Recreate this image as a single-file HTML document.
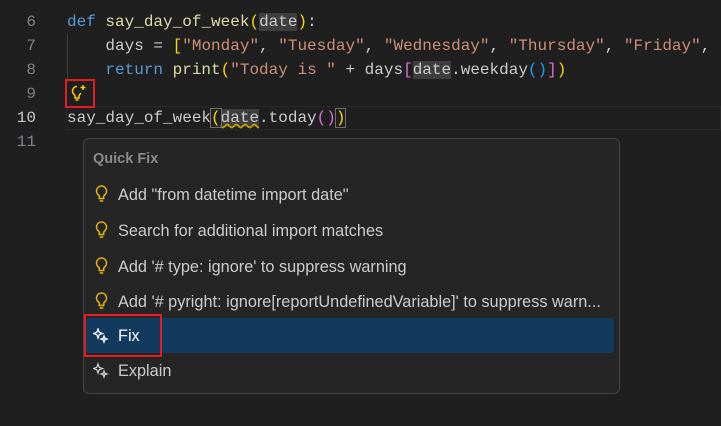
<!DOCTYPE html>
<html><head><meta charset="utf-8"><style>
*{margin:0;padding:0;box-sizing:border-box}
body{width:721px;height:426px;background:#1f1f1f;overflow:hidden;position:relative;font-family:"Liberation Mono",monospace}
.ln{position:absolute;left:0;width:36px;text-align:right;font-size:16px;color:#7d848c;line-height:24px}
.code{position:absolute;left:67px;font-size:16px;line-height:24px;color:#cccccc;white-space:pre}
.k{color:#569cd6}.f{color:#dcdcaa}.s{color:#ce9178}.g{color:#ffd700}.p{color:#da70d6}.b{color:#179fff}
.hl{background:#3e3e3e}
.menu{position:absolute;left:83px;top:138px;width:537px;height:256px;background:#252526;border:1px solid #454545;border-radius:6px;font-family:"Liberation Sans",sans-serif;font-size:16.3px;color:#cccccc}
.item{position:absolute;left:0;width:535px;height:35px;line-height:35px;padding-left:34px}
</style></head><body>
<div style="position:absolute;left:66px;top:106px;width:655px;height:24px;border:1px solid #282828"></div>
<div style="position:absolute;left:67px;top:34px;width:1px;height:48px;background:#404040"></div>
<div class="ln" style="top:10px">6</div>
<div class="ln" style="top:34px">7</div>
<div class="ln" style="top:58px">8</div>
<div class="ln" style="top:82px">9</div>
<div class="ln" style="top:106px;color:#cccccc">10</div>
<div class="ln" style="top:130px">11</div>
<div class="code" style="top:10px"><span class="k">def</span> <span class="f">say_day_of_week</span><span class="g">(</span><span class="hl">date</span><span class="g">)</span>:</div>
<div class="code" style="top:34px">    days = <span class="g">[</span><span class="s">"Monday"</span>, <span class="s">"Tuesday"</span>, <span class="s">"Wednesday"</span>, <span class="s">"Thursday"</span>, <span class="s">"Friday"</span>, </div>
<div class="code" style="top:58px">    <span class="k">return</span> <span class="f">print</span><span class="g">(</span><span class="s">"Today is "</span> + days<span class="p">[</span><span class="hl">date</span>.weekday<span class="b">()</span><span class="p">]</span><span class="g">)</span></div>
<div class="code" style="top:106px">say_day_of_week<span class="g" style="outline:1px solid #707070">(</span><span class="hl" style="text-decoration:underline wavy #cca700">date</span>.today<span class="p">()</span><span class="g" style="outline:1px solid #707070">)</span></div>
<div style="position:absolute;left:65px;top:79px;width:30px;height:29px;border:2px solid #e51c23"></div>
<svg style="position:absolute;left:69px;top:83px" width="20" height="20" viewBox="0 0 20 20" fill="none" stroke="#ffcc00" stroke-width="1.5"><path d="M8 3.5a4.5 4.5 0 0 0-2.8 8c.6.5.8 1.2.8 2V15h4v-1.5c0-.8.2-1.5.8-2a4.5 4.5 0 0 0 1-1.5"/><path d="M6.5 17h3"/><path d="M14 2v5M11.5 4.5h5"/></svg>
<div class="menu">
<div style="position:absolute;left:9px;top:12px;font-weight:bold;color:#8b8b8b;font-size:14.5px">Quick Fix</div>
<div class="item" style="top:39px">Add "from datetime import date"</div>
<div class="item" style="top:75px">Search for additional import matches</div>
<div class="item" style="top:111px">Add '# type: ignore' to suppress warning</div>
<div class="item" style="top:146px">Add '# pyright: ignore[reportUndefinedVariable]' to suppress warn...</div>
<div style="position:absolute;left:2px;top:179px;width:528px;height:35px;background:#123a5e;border-radius:3px"></div>
<div class="item" style="top:180px;color:#fff">Fix</div>
<div class="item" style="top:215px">Explain</div>
</div>
<svg style="position:absolute;left:93px;top:184px" width="18" height="200" viewBox="0 0 18 200" fill="none" stroke="#e8b600" stroke-width="1.5">
<g><path d="M8.5 2a5 5 0 0 0-3 9c.6.5.8 1.1.8 1.8V14.5h4.4v-1.7c0-.7.2-1.3.8-1.8A5 5 0 0 0 8.5 2z"/><path d="M6.7 17h3.6"/></g>
<g transform="translate(0,36)"><path d="M8.5 2a5 5 0 0 0-3 9c.6.5.8 1.1.8 1.8V14.5h4.4v-1.7c0-.7.2-1.3.8-1.8A5 5 0 0 0 8.5 2z"/><path d="M6.7 17h3.6"/></g>
<g transform="translate(0,72)"><path d="M8.5 2a5 5 0 0 0-3 9c.6.5.8 1.1.8 1.8V14.5h4.4v-1.7c0-.7.2-1.3.8-1.8A5 5 0 0 0 8.5 2z"/><path d="M6.7 17h3.6"/></g>
<g transform="translate(0,107)"><path d="M8.5 2a5 5 0 0 0-3 9c.6.5.8 1.1.8 1.8V14.5h4.4v-1.7c0-.7.2-1.3.8-1.8A5 5 0 0 0 8.5 2z"/><path d="M6.7 17h3.6"/></g>
</svg>
<svg style="position:absolute;left:93px;top:328px" width="16" height="60" viewBox="0 0 16 60" fill="none" stroke-width="1.3">
<g stroke="#ffffff"><path d="M5 1l1.2 3.3L9.5 5.5 6.2 6.7 5 10 3.8 6.7 0.5 5.5 3.8 4.3z"/><path d="M11 8l.8 2.2 2.2.8-2.2.8L11 14l-.8-2.2L8 11l2.2-.8z"/></g>
<g stroke="#cccccc" transform="translate(0,35)"><path d="M5 1l1.2 3.3L9.5 5.5 6.2 6.7 5 10 3.8 6.7 0.5 5.5 3.8 4.3z"/><path d="M11 8l.8 2.2 2.2.8-2.2.8L11 14l-.8-2.2L8 11l2.2-.8z"/></g>
</svg>
<div style="position:absolute;left:84px;top:314px;width:78px;height:43px;border:2px solid #e51c23"></div>
</body></html>
